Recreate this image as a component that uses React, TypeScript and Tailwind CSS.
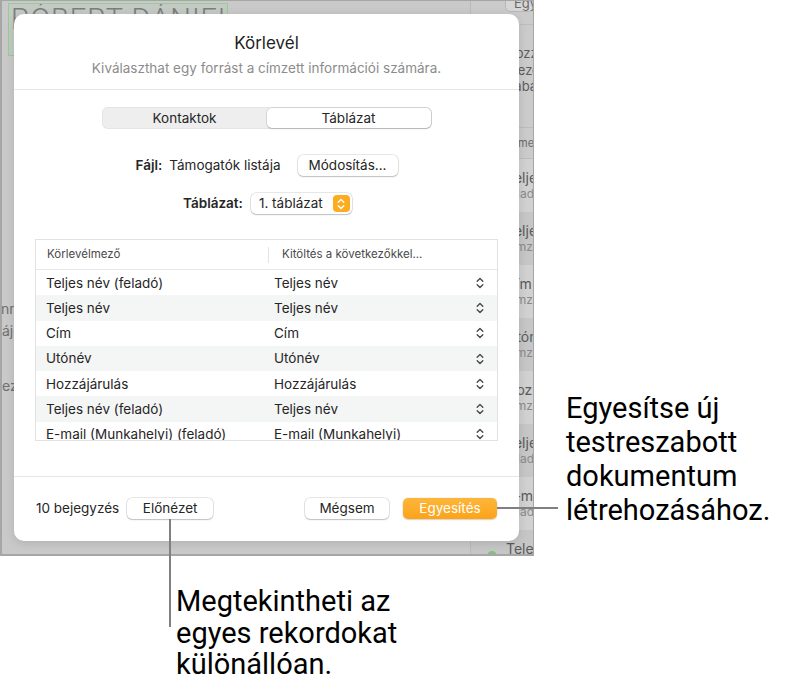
import React from 'react';

const rows: [string, string][] = [
  ['Teljes név (feladó)', 'Teljes név'],
  ['Teljes név', 'Teljes név'],
  ['Cím', 'Cím'],
  ['Utónév', 'Utónév'],
  ['Hozzájárulás', 'Hozzájárulás'],
  ['Teljes név (feladó)', 'Teljes név'],
  ['E-mail (Munkahelyi) (feladó)', 'E-mail (Munkahelyi)'],
];

const sideItems: [string, string][] = [
  ['Teljes név', 'feladó'],
  ['Teljes név', 'címzett'],
  ['Cím', 'címzett'],
  ['Utónév', 'címzett'],
  ['Hozzájárulás', 'címzett'],
  ['Teljes név', 'feladó'],
  ['E-mail', 'feladó'],
  ['Telefon', 'feladó'],
];

function UpDown({ className = '' }: { className?: string }) {
  return (
    <svg
      width="8"
      height="12"
      viewBox="0 0 8 12"
      fill="none"
      stroke="currentColor"
      strokeWidth="1.4"
      strokeLinecap="round"
      strokeLinejoin="round"
      className={className}
    >
      <path d="M1.2 4.3 4 1.5l2.8 2.8M1.2 7.7 4 10.5l2.8-2.8" />
    </svg>
  );
}

function MacButton({ children, className = '' }: { children: React.ReactNode; className?: string }) {
  return (
    <div
      className={
        'flex h-[21px] items-center justify-center rounded-[5px] bg-white text-[13.5px] text-[#262626] shadow-[0_0_0_0.5px_rgba(0,0,0,0.18),0_1px_1.5px_rgba(0,0,0,0.18)] ' +
        className
      }
    >
      {children}
    </div>
  );
}

function Dialog() {
  return (
    <div className="absolute left-[12px] top-[13px] flex h-[527px] w-[505px] flex-col rounded-[10px] bg-white shadow-[0_2px_10px_rgba(0,0,0,0.12)]">
      {/* header */}
      <div className="flex flex-col items-center border-b border-[#e6e6e6] pb-[13px] pt-[19px]">
        <div className="text-[17px] leading-[20px] text-[#1f1f1f]">Körlevél</div>
        <div className="mt-[7px] text-[13.5px] leading-[16px] text-[#8c8c8c]">
          Kiválaszthat egy forrást a címzett információi számára.
        </div>
      </div>

      {/* segmented control */}
      <div className="mx-auto mt-[17px] flex h-[22px] w-[330px] rounded-[6px] bg-[#eeeeee] p-[1px] shadow-[inset_0_0_0_0.5px_rgba(0,0,0,0.08)]">
        <div className="flex flex-1 items-center justify-center text-[13.5px] text-[#262626]">Kontaktok</div>
        <div className="flex flex-1 items-center justify-center rounded-[5px] bg-white text-[13.5px] text-[#262626] shadow-[0_0_0_0.5px_rgba(0,0,0,0.15),0_1px_1.5px_rgba(0,0,0,0.15)]">
          Táblázat
        </div>
      </div>

      {/* file row */}
      <div className="mt-[26px] flex items-center justify-center text-[13.5px] text-[#262626]">
        <span className="font-semibold">Fájl:</span>
        <span className="ml-[7px]">Támogatók listája</span>
        <MacButton className="ml-[17px] w-[100px]">Módosítás...</MacButton>
      </div>

      {/* table row */}
      <div className="mt-[17px] flex items-center justify-center pl-[2px] text-[13.5px] text-[#262626]">
        <span className="font-semibold">Táblázat:</span>
        <div className="ml-[8px] flex h-[21px] w-[101px] items-center justify-between rounded-[5px] bg-white pl-[8px] pr-[2px] shadow-[0_0_0_0.5px_rgba(0,0,0,0.18),0_1px_1.5px_rgba(0,0,0,0.18)]">
          <span>1. táblázat</span>
          <div className="flex h-[17px] w-[17px] items-center justify-center rounded-[4px] bg-[#fdab1f] text-white">
            <UpDown />
          </div>
        </div>
      </div>

      {/* mapping table */}
      <div className="mx-[21px] mt-[25px] h-[202px] overflow-hidden border border-[#e2e2e2]">
        <div className="flex h-[30px] items-center border-b border-[#e8e8e8] text-[11.5px] text-[#4a4a4a]">
          <div className="w-[232px] pl-[11px]">Körlevélmező</div>
          <div className="h-[16px] w-px bg-[#e4e4e4]" />
          <div className="pl-[13px]">Kitöltés a következőkkel...</div>
        </div>
        {rows.map(([field, value], i) => (
          <div
            key={i}
            className={
              'flex h-[25.3px] shrink-0 items-center text-[13.5px] text-[#262626] ' +
              (i % 2 === 1 ? 'bg-[#f4f5f5]' : 'bg-white')
            }
          >
            <div className="w-[238px] pl-[10px]">{field}</div>
            <div className="flex-1">{value}</div>
            <UpDown className="mr-[13px] text-[#4a4a4a]" />
          </div>
        ))}
      </div>

      {/* footer */}
      <div className="mt-auto flex items-center border-t border-[#e6e6e6] px-[22px] pb-[22px] pt-[21px] text-[13.5px] text-[#262626]">
        <span>10 bejegyzés</span>
        <MacButton className="ml-[8px] w-[86px]">Előnézet</MacButton>
        <div className="flex-1" />
        <MacButton className="w-[84px]">Mégsem</MacButton>
        <div className="ml-[14px] flex h-[21px] w-[94px] items-center justify-center rounded-[5px] bg-gradient-to-b from-[#fdb63a] to-[#fca316] text-[13.5px] text-white shadow-[0_0_0_0.5px_rgba(0,0,0,0.08),0_1px_1.5px_rgba(0,0,0,0.15)]">
          Egyesítés
        </div>
      </div>
    </div>
  );
}

export default function App() {
  return (
    <div
      className="relative h-[694px] w-[787px] overflow-hidden bg-white"
      style={{ fontFamily: 'Inter, "Noto Sans", sans-serif' }}
    >
      {/* dimmed app window behind the sheet */}
      <div className="relative flex h-[556px] w-[534px] overflow-hidden whitespace-nowrap border-b-2 border-l-2 border-r border-t border-[#a6a6a6] bg-[#c9c9c9]">
        <div className="flex-1">
          <div className="ml-[6px] mt-[2px] h-[53px] w-[220px] overflow-hidden border border-[#93cf93] bg-[#c3cac3] pl-[2px]">
            <div
              className="mt-[1px] text-[29px] font-light leading-none tracking-[1px] text-[#7d7d7d]"
              style={{ fontFamily: 'Roboto, sans-serif' }}
            >
              RÓBERT DÁNIEL
            </div>
          </div>
          <div className="mt-[242px] flex flex-col text-[14px] leading-[22px] text-[#6f6f6f]">
            <span className="-ml-[1px]">nnak</span>
            <span>ájé</span>
            <span className="mt-[33px]">ezé</span>
          </div>
        </div>
        <div className="flex w-[63px] flex-col border-l border-[#b9b9b9] bg-[#cbcbcb]">
          <div className="h-[127px] shrink-0 border-b border-[#bcbcbc] pl-[35px]">
            <div className="-mt-[6px] h-[16px] rounded-[4px] bg-[#d6d6d6] pl-[8px] text-[13px] leading-[16px] text-[#6a6a6a] shadow-[0_0_0_0.5px_rgba(0,0,0,0.2)]">
              Egyesítés
            </div>
            <div className="mt-[13px] border-t border-[#bdbdbd]" />
            <div className="mt-[20px] text-[13px] leading-[16.5px] text-[#5c5c5c]">
              <div>Hozzáad</div>
              <div>Mezőket</div>
              <div>Sabály</div>
            </div>
          </div>
          <div className="flex h-[31px] shrink-0 items-center border-b border-[#bcbcbc] pl-[30px] text-[11px] text-[#6a6a6a]">
            Célmező
          </div>
          {sideItems.map(([t, s], i) => (
            <div
              key={i}
              className={
                'flex h-[53px] shrink-0 flex-col justify-center pl-[35px] ' +
                (i % 2 === 0 ? 'bg-[#d1d1d1]' : 'bg-[#c6c6c6]')
              }
            >
              <div className="text-[14px] leading-[17px] text-[#5a5a5a]">{t}</div>
              <div className="text-[12px] leading-[16px] text-[#8a8a8a]">{s}</div>
            </div>
          ))}
        </div>
        <div className="absolute left-[485px] top-[550px] h-[10px] w-[10px] rounded-full bg-[#7fc27f]" />
        <Dialog />
      </div>

      {/* callout lines */}
      <div className="absolute left-[169px] top-[519px] h-[108px] w-[2px] bg-[#808080]" />
      <div className="absolute left-[497px] top-[507px] h-[2px] w-[61px] bg-[#808080]" />

      {/* callout texts */}
      <div
        className="absolute left-[566px] top-[391px] text-[29px] leading-[34px] text-black"
        style={{ fontFamily: 'Roboto, "Noto Sans", sans-serif' }}
      >
        <div>Egyesítse új</div>
        <div>testreszabott</div>
        <div>dokumentum</div>
        <div>létrehozásához.</div>
      </div>
      <div
        className="absolute left-[176px] top-[586px] text-[29px] leading-[31.5px] text-black"
        style={{ fontFamily: 'Roboto, "Noto Sans", sans-serif' }}
      >
        <div>Megtekintheti az</div>
        <div>egyes rekordokat</div>
        <div>különállóan.</div>
      </div>
    </div>
  );
}
